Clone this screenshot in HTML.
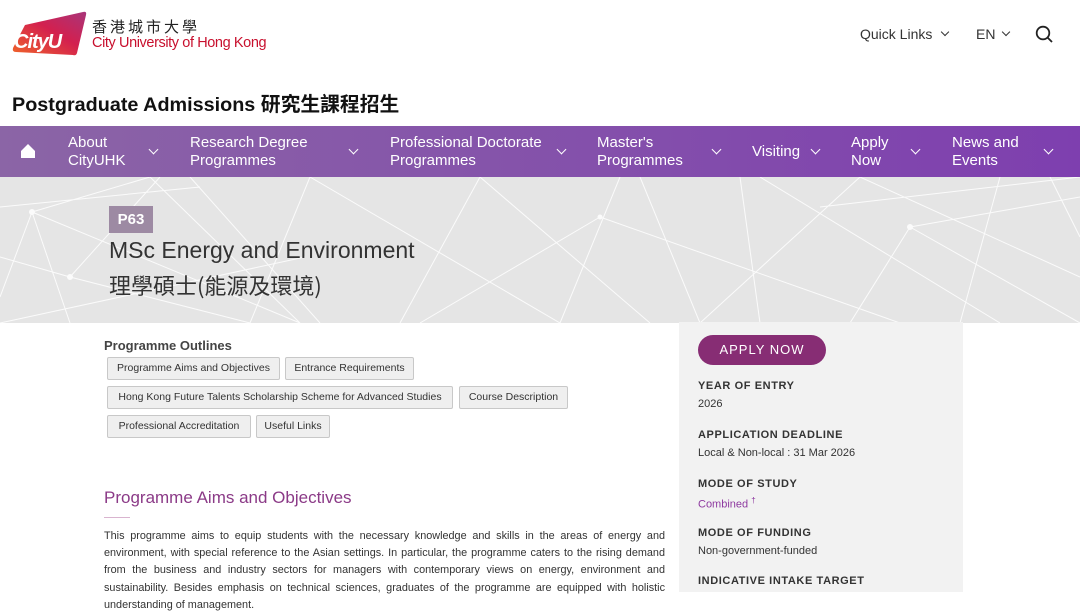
<!DOCTYPE html>
<html><head><meta charset="utf-8"><style>
*{margin:0;padding:0;box-sizing:border-box}
body{width:1080px;height:592px;overflow:hidden;font-family:"Liberation Sans","Noto Sans CJK TC",sans-serif;background:#fff;color:#333;position:relative}
.abs{position:absolute}
.nav{top:126px;left:0;width:1080px;height:51px;background:linear-gradient(90deg,#8b65a6,#7e3faf);color:#fff}
.nav .it{position:absolute;top:8px;font-size:15px;line-height:18px}
.chev{position:absolute;top:20px;width:7px;height:7px;border-right:1.5px solid #fff;border-bottom:1.5px solid #fff;transform:rotate(45deg)}
.hero{top:177px;left:0;width:1080px;height:146px;background:#e5e5e5;overflow:hidden}
.side{top:322px;left:679px;width:284px;height:270px;background:#f2f2f2}
.lbl{font-size:11px;font-weight:bold;letter-spacing:.6px;color:#333}
.val{font-size:11px;color:#333;margin-top:6px}
.btn{position:absolute;height:23px;border:1px solid #c8c8c8;background:#efefef;border-radius:2px;font-size:10.5px;line-height:21px;padding:0 6px;color:#333;white-space:nowrap;text-align:center;overflow:hidden}
</style></head><body>
<svg class="abs" style="left:11px;top:11px" width="78" height="46" viewBox="0 0 78 46">
<defs><linearGradient id="g" x1="0" y1="1" x2="1" y2="0"><stop offset="0" stop-color="#f0642a"/><stop offset=".55" stop-color="#d3204f"/><stop offset="1" stop-color="#a8357a"/></linearGradient></defs>
<path d="M14 14 L72 1 Q76 0 75 4 L66 42 Q65 45 62 44 L5 41 Q1 41 2 37 Z" fill="url(#g)"/>
<text x="3" y="37" font-family="Liberation Sans" font-weight="bold" font-style="italic" font-size="20" fill="#fff" letter-spacing="-1">CityU</text></svg>
<div class="abs" style="left:92px;top:18px;font-size:15px;letter-spacing:3px;color:#222;font-family:'Noto Sans CJK TC',sans-serif;line-height:18px">香港城市大學</div>
<div class="abs" style="left:92px;top:35px;font-size:14.5px;color:#c8102e;letter-spacing:-.4px">City University of Hong Kong</div>
<div class="abs" style="left:860px;top:26px;font-size:14px;color:#333">Quick Links</div>
<div class="abs" style="left:942px;top:29px;width:6px;height:6px;border-right:1.3px solid #333;border-bottom:1.3px solid #333;transform:rotate(45deg)"></div>
<div class="abs" style="left:976px;top:26px;font-size:14px;color:#333">EN</div>
<div class="abs" style="left:1003px;top:29px;width:6px;height:6px;border-right:1.3px solid #333;border-bottom:1.3px solid #333;transform:rotate(45deg)"></div>
<svg class="abs" style="left:1035px;top:25px" width="20" height="20"><circle cx="8" cy="8" r="6.3" fill="none" stroke="#222" stroke-width="1.8"/><line x1="12.5" y1="12.5" x2="17" y2="17" stroke="#222" stroke-width="1.8"/></svg>
<div class="abs" style="left:12px;top:88px;font-size:19.8px;font-weight:bold;color:#111">Postgraduate Admissions 研究生課程招生</div>
<div class="abs nav">
<svg class="abs" style="left:20px;top:17px" width="16" height="16"><path d="M1 8 L8 1 L15 8 V15 H1 Z" fill="#fff"/></svg>
<div class="it" style="left:68px">About<br>CityUHK</div><div class="chev" style="left:150px"></div>
<div class="it" style="left:190px">Research Degree<br>Programmes</div><div class="chev" style="left:350px"></div>
<div class="it" style="left:390px">Professional Doctorate<br>Programmes</div><div class="chev" style="left:558px"></div>
<div class="it" style="left:597px">Master's<br>Programmes</div><div class="chev" style="left:713px"></div>
<div class="it" style="left:752px;top:17px">Visiting</div><div class="chev" style="left:812px"></div>
<div class="it" style="left:851px">Apply<br>Now</div><div class="chev" style="left:912px"></div>
<div class="it" style="left:952px">News and<br>Events</div><div class="chev" style="left:1045px"></div>
</div>
<div class="abs hero">
<svg width="1080" height="146" style="position:absolute;left:0;top:0" stroke="#fff" stroke-width="1" opacity=".85" fill="none">
<path d="M32 35 L0 120 M32 35 L150 0 M32 35 L70 146 M32 35 L300 146 M70 100 L0 80 M70 100 L250 146 M70 100 L160 0 M150 0 L300 146 M190 0 L320 146 M310 0 L250 146 M310 0 L560 146 M305 80 L0 146 M560 146 L620 0 M600 40 L900 146 M600 40 L420 146 M640 0 L700 146 M740 0 L760 146 M760 0 L1000 146 M860 0 L1080 100 M860 0 L700 146 M910 50 L1080 20 M910 50 L850 146 M910 50 L1080 146 M1000 0 L960 146 M1050 0 L1080 60 M480 0 L650 146 M480 0 L400 146 M0 30 L200 10 M820 30 L1080 0"/>
<circle cx="32" cy="35" r="2.5" fill="#fff"/><circle cx="70" cy="100" r="2.5" fill="#fff"/><circle cx="910" cy="50" r="2.5" fill="#fff"/><circle cx="600" cy="40" r="2" fill="#fff"/>
</svg>
<div class="abs" style="left:109px;top:29px;width:44px;height:27px;background:#9d8aa3;color:#fff;font-size:15px;line-height:27px;text-align:center;font-weight:bold">P63</div>
<div class="abs" style="left:109px;top:60px;font-size:23px;color:#333">MSc Energy and Environment</div>
<div class="abs" style="left:109px;top:92px;font-size:22px;color:#333;font-family:'Noto Sans CJK TC',sans-serif">理學碩士(能源及環境)</div>
</div>
<div class="abs side">
<div class="abs" style="left:19px;top:13px;width:128px;height:30px;background:#872d74;border-radius:15px;color:#fff;font-size:13px;letter-spacing:1px;line-height:30px;text-align:center">APPLY NOW</div>
<div class="abs" style="left:19px;top:58px"><div class="lbl">YEAR OF ENTRY</div><div class="val">2026</div></div>
<div class="abs" style="left:19px;top:107px"><div class="lbl">APPLICATION DEADLINE</div><div class="val">Local &amp; Non-local : 31 Mar 2026</div></div>
<div class="abs" style="left:19px;top:156px"><div class="lbl">MODE OF STUDY</div><div class="val" style="color:#8e3aa0">Combined <sup style="font-size:8px">†</sup></div></div>
<div class="abs" style="left:19px;top:205px"><div class="lbl">MODE OF FUNDING</div><div class="val">Non-government-funded</div></div>
<div class="abs" style="left:19px;top:253px"><div class="lbl">INDICATIVE INTAKE TARGET</div></div>
</div>
<div class="abs" style="left:104px;top:338px;font-size:13px;font-weight:bold;color:#444">Programme Outlines</div>
<div class="btn" style="left:107px;top:357px;width:173px">Programme Aims and Objectives</div>
<div class="btn" style="left:285px;top:357px;width:129px">Entrance Requirements</div>
<div class="btn" style="left:107px;top:386px;width:346px">Hong Kong Future Talents Scholarship Scheme for Advanced Studies</div>
<div class="btn" style="left:459px;top:386px;width:109px">Course Description</div>
<div class="btn" style="left:107px;top:415px;width:144px">Professional Accreditation</div>
<div class="btn" style="left:256px;top:415px;width:74px">Useful Links</div>
<div class="abs" style="left:104px;top:488px;font-size:17px;color:#8b3a87">Programme Aims and Objectives</div>
<div class="abs" style="left:104px;top:517px;width:26px;height:1px;background:#d9b4cf"></div>
<div class="abs" style="left:104px;top:528px;width:561px;font-size:10.85px;line-height:17.2px;text-align:justify;color:#333">This programme aims to equip students with the necessary knowledge and skills in the areas of energy and environment, with special reference to the Asian settings. In particular, the programme caters to the rising demand from the business and industry sectors for managers with contemporary views on energy, environment and sustainability. Besides emphasis on technical sciences, graduates of the programme are equipped with holistic understanding of management.</div>
</body></html>
